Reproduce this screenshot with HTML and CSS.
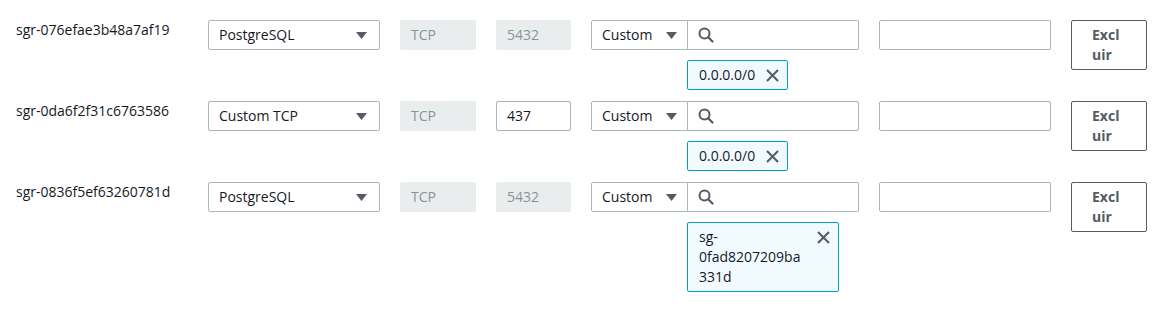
FILE: index.html
```html
<!DOCTYPE html>
<html lang="pt-BR">
<head>
    <meta charset="UTF-8">
    <meta name="viewport" content="width=device-width, initial-scale=1.0">
    <title>Regras de entrada</title>
    <link rel="stylesheet" href="styles.css">
</head>
<body>
    <div class="rules">
        <div class="rule-row">
            <div class="rule-id">sgr-076efae3b48a7af19</div>
            <div class="select"><span>PostgreSQL</span><svg class="caret" width="11" height="7" viewBox="0 0 11 7"><path d="M0 0h11L5.5 7z"/></svg></div>
            <div class="field disabled">TCP</div>
            <div class="field disabled">5432</div>
            <div class="source">
                <div class="source-bar">
                    <div class="select source-type"><span>Custom</span><svg class="caret" width="11" height="7" viewBox="0 0 11 7"><path d="M0 0h11L5.5 7z"/></svg></div>
                    <div class="search"><svg class="search-icon" width="16" height="16" viewBox="0 0 16 16"><circle cx="6.5" cy="6.5" r="5" fill="none" stroke-width="2"/><path d="M10.2 10.2l4.3 4.3" stroke-width="2.2" stroke-linecap="round"/></svg></div>
                </div>
                <div class="token"><span class="token-label">0.0.0.0/0</span><svg class="token-x" width="13" height="13" viewBox="0 0 13 13"><path d="M1 1l11 11M12 1L1 12"/></svg></div>
            </div>
            <div class="field"></div>
            <button class="btn-delete">Excluir</button>
        </div>

        <div class="rule-row">
            <div class="rule-id">sgr-0da6f2f31c6763586</div>
            <div class="select"><span>Custom TCP</span><svg class="caret" width="11" height="7" viewBox="0 0 11 7"><path d="M0 0h11L5.5 7z"/></svg></div>
            <div class="field disabled">TCP</div>
            <div class="field">437</div>
            <div class="source">
                <div class="source-bar">
                    <div class="select source-type"><span>Custom</span><svg class="caret" width="11" height="7" viewBox="0 0 11 7"><path d="M0 0h11L5.5 7z"/></svg></div>
                    <div class="search"><svg class="search-icon" width="16" height="16" viewBox="0 0 16 16"><circle cx="6.5" cy="6.5" r="5" fill="none" stroke-width="2"/><path d="M10.2 10.2l4.3 4.3" stroke-width="2.2" stroke-linecap="round"/></svg></div>
                </div>
                <div class="token"><span class="token-label">0.0.0.0/0</span><svg class="token-x" width="13" height="13" viewBox="0 0 13 13"><path d="M1 1l11 11M12 1L1 12"/></svg></div>
            </div>
            <div class="field"></div>
            <button class="btn-delete">Excluir</button>
        </div>

        <div class="rule-row">
            <div class="rule-id">sgr-0836f5ef63260781d</div>
            <div class="select"><span>PostgreSQL</span><svg class="caret" width="11" height="7" viewBox="0 0 11 7"><path d="M0 0h11L5.5 7z"/></svg></div>
            <div class="field disabled">TCP</div>
            <div class="field disabled">5432</div>
            <div class="source">
                <div class="source-bar">
                    <div class="select source-type"><span>Custom</span><svg class="caret" width="11" height="7" viewBox="0 0 11 7"><path d="M0 0h11L5.5 7z"/></svg></div>
                    <div class="search"><svg class="search-icon" width="16" height="16" viewBox="0 0 16 16"><circle cx="6.5" cy="6.5" r="5" fill="none" stroke-width="2"/><path d="M10.2 10.2l4.3 4.3" stroke-width="2.2" stroke-linecap="round"/></svg></div>
                </div>
                <div class="token token-wide"><span class="token-label">sg-0fad8207209ba331d</span><svg class="token-x" width="13" height="13" viewBox="0 0 13 13"><path d="M1 1l11 11M12 1L1 12"/></svg></div>
            </div>
            <div class="field"></div>
            <button class="btn-delete">Excluir</button>
        </div>
    </div>
</body>
</html>
```

FILE: styles.css
```css
body { margin: 0; padding: 20px 16px; background: #fff; color: #16191f; font-family: "Open Sans", "Noto Sans", sans-serif; font-size: 14px; line-height: 20px; }
.rules { display: flex; flex-direction: column; gap: 11px; }
.rule-row { display: grid; grid-template-columns: 172px 172px 76px 75px 268px 172px 76px; column-gap: 20px; align-items: start; }
.rule-id { padding-top: 0; }

.select, .field, .search { box-sizing: border-box; height: 30px; border: 1px solid #aab7b8; border-radius: 2px; background: #fff; }
.select { display: flex; align-items: center; justify-content: space-between; padding: 0 12px 0 10px; }
.caret { fill: #545b64; flex: none; }
.field { padding: 4px 10px; }
.field.disabled { background: #eaeded; border-color: #eaeded; color: #879596; }

.source { display: flex; flex-direction: column; }
.source-bar { display: flex; }
.source-type { width: 97px; flex: none; border-radius: 2px 0 0 2px; padding-right: 10px; }
.search { flex: 1; margin-left: -1px; border-radius: 0 2px 2px 0; display: flex; align-items: center; padding-left: 10px; }
.search-icon { stroke: #545b64; }

.token { align-self: flex-start; box-sizing: border-box; max-width: 152px; margin: 10px 0 0 96px; padding: 4px 8px 4px 11px; display: flex; align-items: flex-start; gap: 11px; border: 1px solid #00a1c9; border-radius: 2px; background: #f1faff; }
.token-label { overflow-wrap: anywhere; }
.token-x { flex: none; margin-top: 4px; stroke: #545b64; stroke-width: 2; }

.btn-delete { box-sizing: border-box; width: 76px; padding: 4px 20px; border: 1px solid #545b64; border-radius: 2px; background: #fff; color: #545b64; font: bold 14px/20px "Open Sans", "Noto Sans", sans-serif; text-align: left; overflow-wrap: anywhere; cursor: pointer; }
```
